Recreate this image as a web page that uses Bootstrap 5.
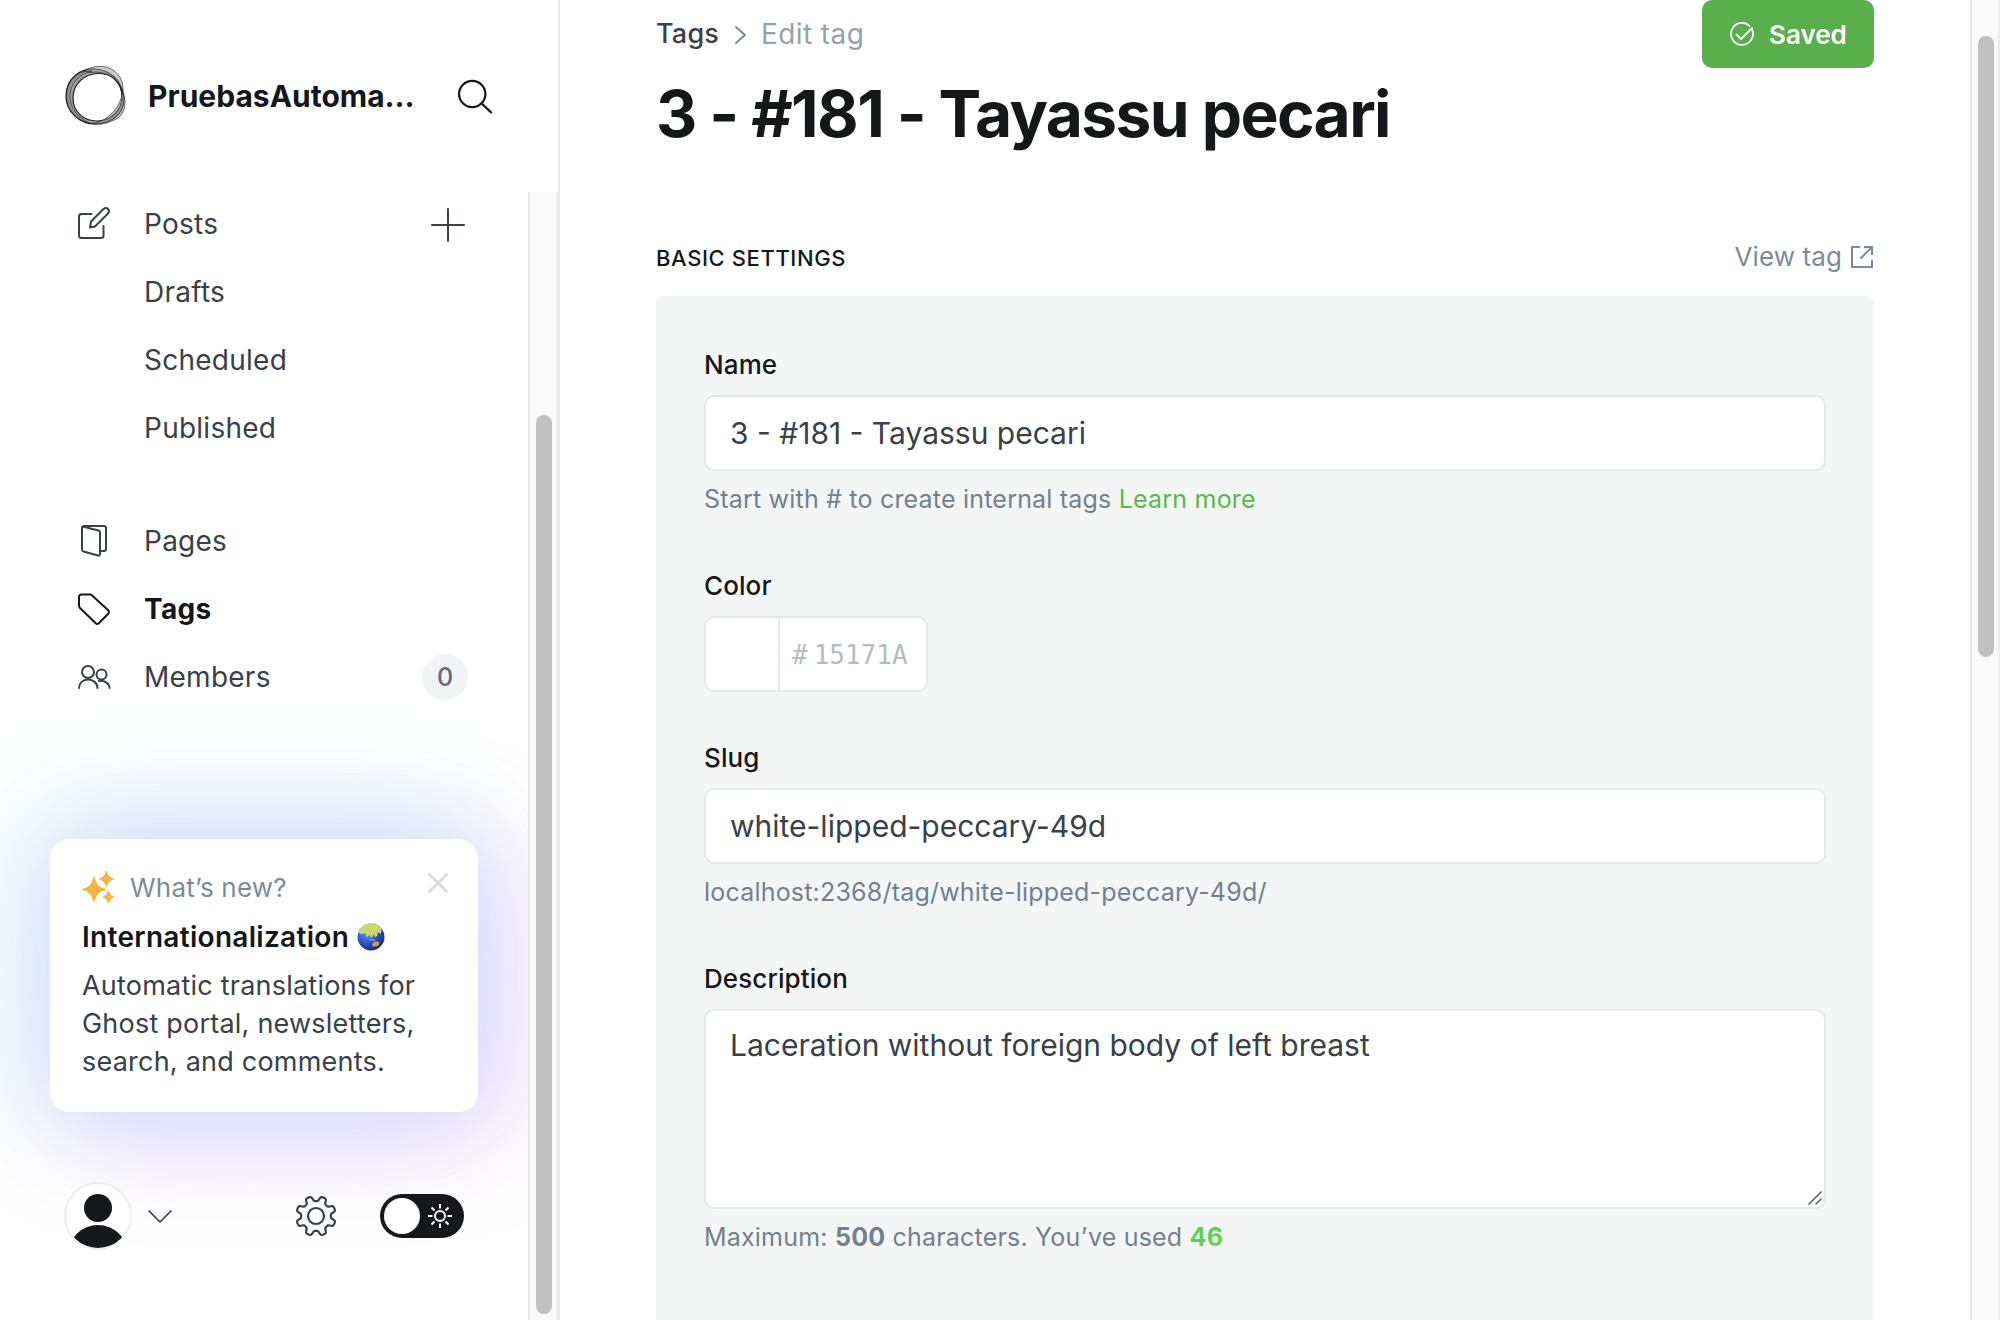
<!DOCTYPE html>
<html lang="en">
<head>
<meta charset="utf-8">
<title>3 - #181 - Tayassu pecari - Tags</title>
<link rel="stylesheet" href="https://cdn.jsdelivr.net/npm/bootstrap@5.3.0/dist/css/bootstrap.min.css">
<style>
html, body { height: 1320px; overflow: hidden; }
body { font-family: Inter, "Liberation Sans", sans-serif; font-size: 28px; letter-spacing: .25px; color: #15171a; background: #fff; }
a { text-decoration: none; }
svg { display: block; flex: none; overflow: visible; }
.ico { fill: none; stroke: #394047; stroke-width: 2; stroke-linecap: round; stroke-linejoin: round; }
.side { width: 560px; border-right: 2px solid #e8e9ea; flex: none; }
.side-head { height: 190px; padding: 65px 64px 0 65px; }
.site-name { font-size: 30px; line-height: 62px; font-weight: 700; margin-left: 21px; width: 268px; letter-spacing: 0; white-space: nowrap; }
.side-main { width: 528px; overflow: hidden; margin-top: -40px; padding-top: 40px; }
.rail { width: 30px; background: #fafafa; border-left: 2px solid #e8e8e8; border-right: 2px solid #ededed; }
.side-rail { margin-top: 2px; padding: 223px 0 0 6px; }
.side-thumb { width: 16px; height: 899px; border-radius: 8px; background: #c1c1c1; }
.nav-row { height: 68px; padding: 0 60px 0 144px; color: #394047; line-height: 68px; }
.nav-row.has-icon { padding-left: 78px; }
.nav-row.has-icon svg:first-child { margin-right: 34px; }
.nav-row.current { color: #15171a; font-weight: 700; letter-spacing: .3px; }
.count { width: 46px; height: 46px; border-radius: 23px; background: #f1f3f4; color: #626d79; font-size: 25px; line-height: 46px; font-weight: 500; text-align: center; letter-spacing: 0; }
.pages-row { margin-top: 45px; }
.news { width: 428px; height: 273px; margin: 128px 0 0 50px; padding: 31px 32px; border-radius: 20px; background: #fff; box-shadow: -14px -12px 110px 8px rgba(75,225,226,.24), 14px 12px 110px 8px rgba(202,103,255,.32); }
.news-kicker { font-size: 26px; line-height: 36px; color: #7c8b9a; margin-left: 16px; letter-spacing: .2px; }
.news-title { font-size: 28px; font-weight: 600; line-height: 36px; margin: 13px 0 12px; letter-spacing: .3px; }
.news-text { font-size: 27px; line-height: 38px; color: #394047; margin: 0; white-space: nowrap; letter-spacing: .22px; }
.side-foot { height: 68px; margin-top: 70px; padding: 0 64px; }
.page { width: 1410px; padding-left: 96px; flex: none; }
.page-in { width: 1218px; }
.crumb { height: 68px; line-height: 66px; letter-spacing: .4px; }
.crumb-top { color: #394047; font-size: 27px; letter-spacing: .2px; }
.crumb-here { color: #95a1ad; }
.btn-saved { width: 172px; height: 68px; border: 0; border-radius: 10px; background: #5aaf4d; color: #fff; font-size: 26px; font-weight: 600; letter-spacing: 0; padding: 0 0 0 28px; }
.btn-saved:hover { background: #5aaf4d; color: #fff; }
.page-title { font-size: 64px; line-height: 80px; font-weight: 700; letter-spacing: -1.6px; margin: 6px 0 0; white-space: nowrap; }
.sect { height: 40px; margin-top: 84px; }
.sect-name { font-size: 22px; font-weight: 500; line-height: 40px; margin: 0; letter-spacing: .6px; }
.view-tag { color: #7c8b9a; font-size: 26px; line-height: 38px; height: 38px; letter-spacing: .1px; }
.panel { margin-top: 18px; height: 1024px; border-radius: 6px 6px 0 0; background: #f4f6f6; padding: 51px 48px 0; }
.fld-label { display: block; font-size: 26px; font-weight: 500; line-height: 36px; margin-bottom: 12px; letter-spacing: .1px; }
.form-control.fld { height: 76px; border: 2px solid #e6e9e9; border-radius: 10px; background: #fff; font-size: 30px; line-height: 38px; padding: 0 24px; color: #394047; letter-spacing: 0; }
.form-control.fld-area { height: 200px; padding-top: 15px; resize: none; }
.grip { position: absolute; right: 4px; bottom: 4px; }
.help { font-size: 25px; line-height: 36px; color: #738091; margin: 10px 0 0; white-space: nowrap; letter-spacing: .2px; }
.gap-a { margin-top: 51px; } .gap-b { margin-top: 48px; } .gap-c { margin-top: 51px; }
.green { color: #5ab94b; } .green-b { color: #5fd153; }
.color-box { width: 224px; height: 76px; border: 2px solid #e6e9e9; border-radius: 10px; background: #fff; }
.swatch { width: 74px; border-right: 2px solid #e6e9e9; }
.hex { font: 26px/74px "DejaVu Sans Mono", monospace; color: #b4bcc5; letter-spacing: 0; padding-left: 12px; }
.hex-val { margin-left: 6px; }
.page-rail { padding: 36px 0 0 6px; }
.page-thumb { width: 16px; height: 621px; border-radius: 8px; background: #c1c1c1; }
</style>
<script src="https://cdn.jsdelivr.net/npm/bootstrap@5.3.0/dist/js/bootstrap.bundle.min.js"></script>
</head>
<body>
<div class="d-flex h-100">
  <aside class="side d-flex flex-column">
    <header class="side-head d-flex align-items-start">
      <svg width="62" height="62" viewBox="65 65 62 62" fill="none" stroke="#222">
        <path d="M66 96C66 79 80 68 95 69C100 69 118 73 122 90C126 100 124 112 113 119C106 123 100 124 95 124C80 124 66 112 66 96ZM73 98C73 84 84 73.500 99 73.500C112 73.500 122 83 122 97C122 110 111 121 97 121C83 121 73 111 73 98Z" fill="#555" fill-opacity=".55" fill-rule="evenodd" stroke-width="1.200"/>
        <path d="M84 71C90 67 97 66 103 66.500C114 67.500 124 77 123 91C117 76 104 71 90 72.500Z" fill="#999" fill-opacity=".5" stroke-width=".8" stroke-opacity=".8"/>
        <path d="M122.500 90C128 105 124 117 113 120.500C106 124 98 125 92 123.500C106 122 118 110 121.500 97Z" fill="#888" fill-opacity=".5" stroke-width=".8" stroke-opacity=".8"/>
        <path d="M67 92C65 108 74 119 90 123.500C77 117 70 108 70 96C70 84 79 74 92 71C78 70 68 80 67 92Z" fill="#777" fill-opacity=".4" stroke-width=".7" stroke-opacity=".8"/>
      </svg>
      <div class="site-name">PruebasAutoma…</div>
      <svg class="ms-auto mt-2 pt-1" style="height:50px" width="38" height="50" viewBox="455 69 38 50" fill="none" stroke="#15171a" stroke-width="2.400" stroke-linecap="round"><circle cx="471" cy="87.500" r="14.300"/><path d="M481.500 98L491.500 107.500"/></svg>
    </header>
    <div class="d-flex flex-grow-1">
      <div class="side-main">
        <nav>
          <div class="nav-row has-icon d-flex align-items-center">
            <svg class="ico" width="32" height="32" viewBox="78 207 32 32"><path d="M91.500 213H81.500Q79 213 79 215.500V234.500Q79 237 81.500 237H101Q103.500 237 103.500 234.500V225"/><path d="M90 226.500L91 220.500L103.500 208Q106 206 108 208Q110 210.300 108 212.500L95 225.500Z"/></svg>Posts
            <svg class="ico ms-auto" style="margin-right:3px" width="34" height="34" viewBox="431 207 34 34"><path d="M432 225H464M448 209V241"/></svg>
          </div>
          <div class="nav-row">Drafts</div>
          <div class="nav-row">Scheduled</div>
          <div class="nav-row">Published</div>
          <div class="nav-row has-icon pages-row d-flex align-items-center">
            <svg class="ico" width="32" height="32" viewBox="78 525 32 32"><path d="M82 528Q82 526 84 526H104Q106 526 106 528V549Q106 551 104 551H100.500M82.500 526.500L98.500 530.500Q100 531 100 532.500V554Q100 556 98 555.500L83.500 551.500Q82 551 82 549.500V527.500"/></svg>Pages
          </div>
          <div class="nav-row has-icon current d-flex align-items-center">
            <svg class="ico" style="stroke:#15171a" width="32" height="32" viewBox="78 593 32 32"><path d="M81.500 594.500H91L108.500 610.500Q109.500 612 108.500 613.500L98.500 623.500Q97 624.500 96 623.500L80 608Q79 607 79 605.500V597Q79 594.500 81.500 594.500Z"/></svg>Tags
          </div>
          <div class="nav-row has-icon d-flex align-items-center">
            <svg class="ico" width="32" height="32" viewBox="78 661 32 32"><circle cx="88" cy="672" r="6"/><circle cx="101.500" cy="674.500" r="5"/><path d="M79 688C79 683 83 679.500 88 679.500S97.500 683 97.500 688M99 681C105 680 109.500 684 109.500 688"/></svg>Members
            <span class="count ms-auto">0</span>
          </div>
        </nav>
        <section class="news">
          <div class="d-flex align-items-center">
            <svg width="32" height="34" viewBox="82 872 32 34" fill="#f5b544"><path d="M94 878Q96.500 889 106 890.500Q96.500 892 94 902.500Q91.500 892 82 890.500Q91.500 889 94 878ZM106.500 872Q108 878.500 113.500 880Q108 881.500 106.500 887.500Q105 881.500 99.500 880Q105 878.500 106.500 872ZM108.500 892Q109.800 897 114 898Q109.800 899 108.500 904Q107.200 899 103 898Q107.200 897 108.500 892Z" stroke="#f5b544" stroke-width="1" stroke-linejoin="round"/></svg>
            <span class="news-kicker">What’s new?</span>
            <svg class="ms-auto" style="margin-top:-11px;margin-right:-2px" width="20" height="20" viewBox="0 0 20 20" stroke="#dadcde" stroke-width="3" stroke-linecap="round"><path d="M1.500 1.500L18.500 18.500M18.500 1.500L1.500 18.500"/></svg>
          </div>
          <h2 class="news-title d-flex align-items-center">Internationalization
            <svg class="ms-2" width="28" height="28" viewBox="0 0 28 28"><defs><radialGradient id="sea" cx=".35" cy=".3" r=".75"><stop offset="0" stop-color="#6ca0ec"/><stop offset=".6" stop-color="#2a50c0"/><stop offset="1" stop-color="#182878"/></radialGradient></defs><circle cx="14" cy="14" r="13.500" fill="url(#sea)"/><path d="M2.500 7Q7 0.500 14 .6Q21 1 24.500 6L24 11L21 9L20 13L18 14L16.500 11L15 15L12.500 12L10 14L8 10L4 11L1.500 10Z" fill="#c8d96a"/><path d="M15 21Q18 17.500 22 19Q23 22.500 19 23.500Q15 24 15 21Z" fill="#c7a83e"/><path d="M12 16.500L18 17.500" stroke="#9cb457" stroke-width="1.200"/></svg>
          </h2>
          <p class="news-text">Automatic translations for<br>Ghost portal, newsletters,<br>search, and comments.</p>
        </section>
        <div class="side-foot d-flex align-items-center">
          <svg width="68" height="68" viewBox="64 1182 68 68"><defs><clipPath id="face"><circle cx="98" cy="1216" r="32"/></clipPath></defs><circle cx="98" cy="1216" r="33" fill="#fff" stroke="#ebedef" stroke-width="2"/><g clip-path="url(#face)" fill="#15171a"><circle cx="98" cy="1208" r="14"/><ellipse cx="98" cy="1255" rx="30" ry="30"/></g></svg>
          <svg class="ico" style="margin-left:16px;stroke-width:1.700" width="24" height="14" viewBox="148 1209 24 14"><path d="M149 1211L160 1222L171 1211"/></svg>
          <svg class="ico" style="margin-left:123px;stroke-width:2.200" width="42" height="42" viewBox="-21 -21 42 42"><circle r="8"/><path id="gear"/></svg>
          <svg style="margin-left:43px" width="84" height="44" viewBox="380 1194 84 44"><rect x="380" y="1194" width="84" height="44" rx="22" fill="#15171a"/><circle cx="402" cy="1216" r="18" fill="#fff"/><g transform="translate(440 1216)" fill="none" stroke="#fff" stroke-width="2"><circle r="5"/><path d="M0-12V-7.500M0 12V7.500M-12 0H-7.500M12 0H7.500M-8.500-8.500L-5.500-5.500M8.500 8.500L5.500 5.500M-8.500 8.500L-5.500 5.500M8.500-8.500L5.500-5.500"/></g></svg>
        </div>
      </div>
      <div class="rail side-rail"><div class="side-thumb"></div></div>
    </div>
  </aside>

  <main class="page">
    <div class="page-in">
      <div class="d-flex justify-content-between">
        <div class="crumb d-flex align-items-center">
          <span class="crumb-top fw-medium">Tags</span>
          <svg class="ico" style="stroke:#7c8b9a;margin:2px 15px 0 16px" width="11" height="18" viewBox="0 0 11 18"><path d="M1 1L10 9L1 17"/></svg>
          <span class="crumb-here">Edit tag</span>
        </div>
        <button class="btn btn-saved d-flex align-items-center"><svg width="24" height="24" viewBox="0 0 24 24" fill="none" stroke="#fff" stroke-width="1.800" stroke-linecap="round" stroke-linejoin="round"><path d="M19.500 3.800A11 11 0 1 0 22 7.300"/><path d="M6.500 12.500L11 17L22 6"/></svg><span style="margin-left:15px">Saved</span></button>
      </div>
      <h1 class="page-title">3 - #181 - Tayassu pecari</h1>
      <div class="sect d-flex justify-content-between">
        <h4 class="sect-name">BASIC SETTINGS</h4>
        <a class="view-tag d-flex align-items-center" href="#">View tag<svg style="margin-left:8px" width="24" height="24" viewBox="0 0 24 24" fill="none" stroke="#7c8b9a" stroke-width="2"><path d="M10 2H2V22H22V15M14 2H22V10M22 2L10.500 13.500"/></svg></a>
      </div>
      <form class="panel">
        <div>
          <label class="fld-label">Name</label>
          <input class="form-control fld" value="3 - #181 - Tayassu pecari">
          <p class="help">Start with # to create internal tags <a class="green" href="#">Learn more</a></p>
        </div>
        <div class="gap-a">
          <label class="fld-label">Color</label>
          <div class="color-box d-flex"><div class="swatch"></div><div class="hex d-flex"><span>#</span><span class="hex-val">15171A</span></div></div>
        </div>
        <div class="gap-b">
          <label class="fld-label">Slug</label>
          <input class="form-control fld" value="white-lipped-peccary-49d">
          <p class="help">localhost:2368/tag/white-lipped-peccary-49d/</p>
        </div>
        <div class="gap-c">
          <label class="fld-label">Description</label>
          <div class="position-relative">
            <textarea class="form-control fld fld-area">Laceration without foreign body of left breast</textarea>
            <svg class="grip" width="14" height="14" viewBox="0 0 14 14" stroke="#606060" stroke-width="1.500"><path d="M.5 13.500L13.500 .5M7.500 13.500L13.500 7.500"/></svg>
          </div>
          <p class="help">Maximum: <b>500</b> characters. You’ve used <b class="green-b">46</b></p>
        </div>
      </form>
    </div>
  </main>
  <div class="rail page-rail"><div class="page-thumb"></div></div>
</div>
<script>
// Eight-toothed cog outline, sampled around the circle
const pts = [];
for (let i = 0; i < 240; i++) {
  const a = i / 240 * 2 * Math.PI, w = Math.cos(8 * (a - Math.PI / 8));
  const r = 17.4 + 2.5 * Math.tanh(2.2 * w) / Math.tanh(2.2);
  pts.push((r * Math.cos(a)).toFixed(2) + ' ' + (r * Math.sin(a)).toFixed(2));
}
document.getElementById('gear').setAttribute('d', 'M' + pts.join('L') + 'Z');
</script>
</body>
</html>
